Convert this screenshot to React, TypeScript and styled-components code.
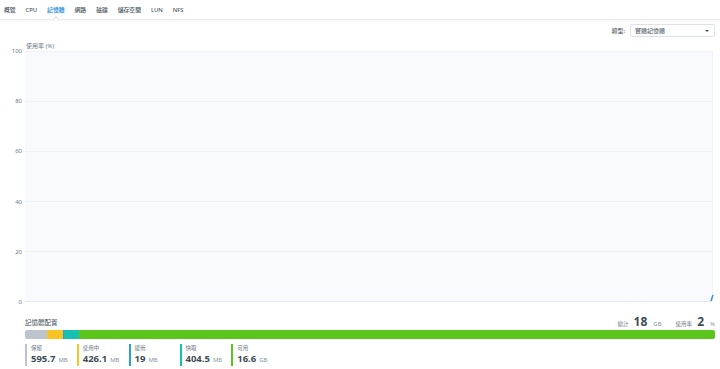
import styled, { createGlobalStyle } from "styled-components";

const GlobalStyle = createGlobalStyle`
  body {
    margin: 0;
    background: #ffffff;
    font-family: "Noto Sans", "Noto Sans CJK TC", sans-serif;
    color: #414b55;
  }
`;

const tabs = ["概覽", "CPU", "記憶體", "網路", "磁碟", "儲存空間", "LUN", "NFS"];
const ticks = ["100", "80", "60", "40", "20", "0"];

const legend = [
  { label: "保留", value: "595.7", unit: "MB", mb: 595.7, color: "#bcc4cf" },
  { label: "使用中", value: "426.1", unit: "MB", mb: 426.1, color: "#f7c325" },
  { label: "緩衝", value: "19", unit: "MB", mb: 19, color: "#2a9fd8" },
  { label: "快取", value: "404.5", unit: "MB", mb: 404.5, color: "#17c0b0" },
  { label: "可用", value: "16.6", unit: "GB", mb: 16998, color: "#5bc51c" },
];

function App() {
  return (
    <>
      <GlobalStyle />
      <TabBar>
        {tabs.map((t) => (
          <Tab key={t} $active={t === "記憶體"}>
            {t}
          </Tab>
        ))}
      </TabBar>
      <Page>
        <Toolbar>
          <FieldLabel>類型:</FieldLabel>
          <Select>
            <span>實體記憶體</span>
            <Caret />
          </Select>
        </Toolbar>

        <Chart>
          <Caption>使用率 (%)</Caption>
          <YAxis>
            {ticks.map((t) => (
              <Tick key={t}>{t}</Tick>
            ))}
          </YAxis>
          <Plot>
            <Band />
            <Band />
            <Band />
            <Band />
            <Band />
            <Spike width="6" height="8" viewBox="0 0 6 8">
              <path d="M3 8 L5 2" stroke="#2a8fe0" strokeWidth="1.4" fill="none" />
            </Spike>
          </Plot>
        </Chart>

        <AllocHeader>
          <Title>記憶體配置</Title>
          <Summary>
            <SmallLabel>總計</SmallLabel>
            <BigNum>18</BigNum>
            <Unit>GB</Unit>
            <SmallLabel $gap>使用率</SmallLabel>
            <BigNum>2</BigNum>
            <Unit>%</Unit>
          </Summary>
        </AllocHeader>

        <Bar>
          {legend.map((l) => (
            <Segment key={l.label} $grow={l.mb} $color={l.color} />
          ))}
        </Bar>

        <Legend>
          {legend.map((l) => (
            <LegendItem key={l.label} $color={l.color}>
              <LegendLabel>{l.label}</LegendLabel>
              <LegendValue>
                {l.value}
                <Unit>{l.unit}</Unit>
              </LegendValue>
            </LegendItem>
          ))}
        </Legend>
      </Page>
    </>
  );
}

const TabBar = styled.div`
  display: flex;
  align-items: center;
  gap: 10px;
  height: 19px;
  padding-left: 4px;
  border-bottom: 1px solid #e8ebef;
  box-shadow: 0 1px 2px rgba(0, 0, 0, 0.04);
`;

const Tab = styled.div<{ $active?: boolean }>`
  position: relative;
  height: 19px;
  line-height: 20px;
  font-size: 5.8px;
  font-weight: 500;
  color: ${(p) => (p.$active ? "#0a86e0" : "#4a545e")};

  &::after {
    content: "";
    display: ${(p) => (p.$active ? "block" : "none")};
    position: absolute;
    left: 50%;
    bottom: -2px;
    width: 3px;
    height: 3px;
    margin-left: -2px;
    background: #ffffff;
    border-left: 1px solid #d4d9df;
    border-top: 1px solid #d4d9df;
    transform: rotate(45deg);
  }
`;

const Page = styled.div`
  padding: 0 5px 0 0;
`;

const Toolbar = styled.div`
  display: flex;
  justify-content: flex-end;
  align-items: center;
  gap: 5px;
  margin-top: 4px;
`;

const FieldLabel = styled.span`
  font-size: 6px;
  color: #414b55;
`;

const Select = styled.div`
  display: flex;
  align-items: center;
  justify-content: space-between;
  box-sizing: border-box;
  width: 85px;
  height: 13px;
  padding: 0 5px 0 4px;
  border: 1px solid #dfe3e8;
  border-radius: 2px;
  font-size: 6px;
  color: #414b55;
`;

const Caret = styled.span`
  width: 0;
  height: 0;
  border-left: 2px solid transparent;
  border-right: 2px solid transparent;
  border-top: 2.5px solid #4b5560;
`;

const Chart = styled.div`
  display: grid;
  grid-template-columns: 22px 1fr;
  column-gap: 3px;
  margin-top: 5px;
  margin-right: 2px;
`;

const Caption = styled.div`
  grid-column: 2;
  font-size: 6px;
  line-height: 8px;
  color: #6e7a86;
  margin-bottom: 1px;
  padding-left: 1px;
`;

const YAxis = styled.div`
  grid-column: 1;
  display: flex;
  flex-direction: column;
  justify-content: space-between;
  align-items: flex-end;
  margin: -4px 0;
`;

const Tick = styled.span`
  font-size: 6px;
  line-height: 8px;
  color: #6e7a86;
`;

const Plot = styled.div`
  grid-column: 2;
  position: relative;
  display: flex;
  flex-direction: column;
  background: #f8fafd;
  border-top: 1px solid #eef1f5;
  border-right: 1px solid #eef1f5;
  border-bottom: 1px solid #e4e8ed;
`;

const Band = styled.div`
  height: 50px;
  border-top: 1px solid #eef1f5;
  box-sizing: border-box;

  &:first-child {
    border-top: none;
    height: 49px;
  }
`;

const Spike = styled.svg`
  position: absolute;
  right: -2px;
  bottom: 0;
`;

const AllocHeader = styled.div`
  display: flex;
  justify-content: space-between;
  align-items: flex-end;
  margin-top: 14px;
  padding-left: 25px;
`;

const Title = styled.div`
  font-size: 6.5px;
  line-height: 10px;
  color: #414b55;
`;

const Summary = styled.div`
  display: flex;
  align-items: baseline;
  gap: 3px;
`;

const SmallLabel = styled.span<{ $gap?: boolean }>`
  font-size: 5.5px;
  color: #6e7a86;
  margin-left: ${(p) => (p.$gap ? "11px" : "6px")};
  margin-right: 2px;
`;

const BigNum = styled.span`
  font-size: 12px;
  line-height: 12px;
  font-weight: 700;
  color: #414b55;
`;

const Unit = styled.span`
  font-size: 6px;
  font-weight: 400;
  color: #8a95a0;
  margin-left: 3px;
`;

const Bar = styled.div`
  display: flex;
  height: 9px;
  margin-top: 2px;
  margin-left: 25px;
  border-radius: 2px;
  overflow: hidden;
`;

const Segment = styled.div<{ $grow: number; $color: string }>`
  flex: ${(p) => p.$grow} 1 0;
  background: ${(p) => p.$color};
`;

const Legend = styled.div`
  display: flex;
  gap: 9px;
  margin-top: 5px;
  margin-left: 25px;
`;

const LegendItem = styled.div<{ $color: string }>`
  box-sizing: border-box;
  min-width: 42px;
  padding-left: 4px;
  border-left: 2px solid ${(p) => p.$color};
  display: flex;
  flex-direction: column;
`;

const LegendLabel = styled.span`
  font-size: 5.5px;
  line-height: 9px;
  color: #6e7a86;
`;

const LegendValue = styled.span`
  font-size: 9.5px;
  line-height: 11px;
  font-weight: 700;
  color: #414b55;
  white-space: nowrap;
`;

export default App;
